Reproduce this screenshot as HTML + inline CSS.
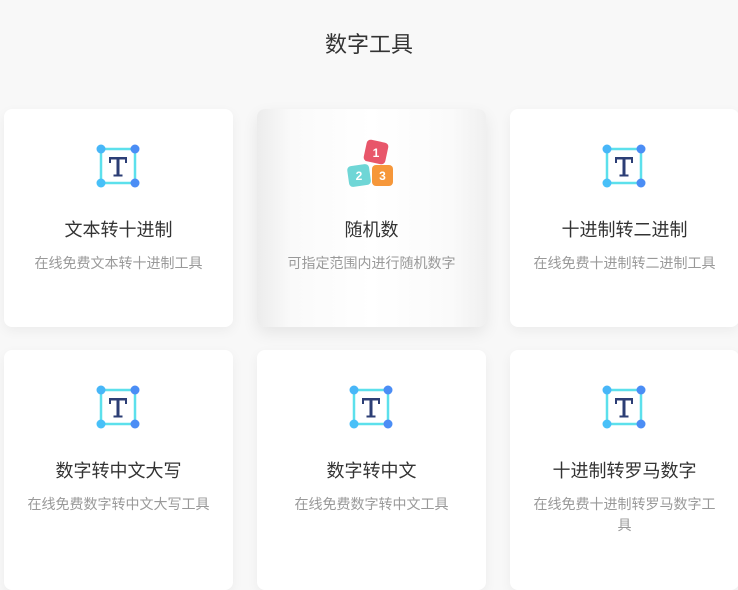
<!DOCTYPE html>
<html><head><meta charset="utf-8"><style>
*{margin:0;padding:0;box-sizing:border-box}
body{width:738px;height:566px;overflow:hidden;background:#f8f8f8;font-family:"Liberation Sans","Noto Sans CJK SC",sans-serif;position:relative}
h1{position:absolute;top:27px;left:0;width:738px;text-align:center;font-size:22px;font-weight:normal;color:#333}
.card{position:absolute;width:229px;background:#fff;border-radius:8px;text-align:center;box-shadow:0 4px 12px rgba(0,0,0,0.05)}
.card.hov{background:linear-gradient(90deg,#ececec 0%,#fafafa 15%,#fff 50%,#fafafa 85%,#f0f0f0 100%);box-shadow:0 6px 16px rgba(0,0,0,0.08)}
.ic{position:absolute;left:92px;top:35px;width:44px;height:44px}
.t{position:absolute;top:107px;width:100%;font-size:18px;color:#333}
.d{position:absolute;top:144px;left:20px;right:20px;font-size:14px;color:#999;line-height:21px}
</style></head><body>
<h1>数字工具</h1>
<svg width="0" height="0" style="position:absolute"><defs>
<g id="ti">
<rect x="5" y="5" width="34" height="34" fill="none" stroke="#5ce0ec" stroke-width="2.5"/>
<circle cx="5" cy="5" r="4.5" fill="#48b6f8"/><circle cx="39" cy="5" r="4.5" fill="#4b8df5"/>
<circle cx="5" cy="39" r="4.5" fill="#48c0f8"/><circle cx="39" cy="39" r="4.5" fill="#4b8df5"/>
<path d="M13 13h18v6h-2v-3.5h-5.5v15h3v2h-9v-2h3v-15H15v3.5h-2z" fill="#2c3e75"/>
</g></defs></svg>
<div class="card" style="left:4px;top:109px;height:218px"><svg class="ic" viewBox="0 0 44 44"><use href="#ti"/></svg><div class="t">文本转十进制</div><div class="d">在线免费文本转十进制工具</div></div>
<div class="card hov" style="left:257px;top:109px;height:218px"><svg style="position:absolute;left:87px;top:30px;width:52px;height:50px" viewBox="0 0 52 50">
<rect x="21" y="2" width="22" height="22" rx="4" fill="#e8566a" transform="rotate(12 32 13)"/><text x="32" y="18" font-size="12" font-weight="bold" fill="#fff" text-anchor="middle" font-family="Liberation Sans">1</text>
<rect x="4" y="26" width="22" height="21" rx="4" fill="#6fd6d6" transform="rotate(-8 15 36)"/><text x="15" y="41" font-size="12" font-weight="bold" fill="#fff" text-anchor="middle" font-family="Liberation Sans">2</text>
<rect x="28" y="26" width="21" height="21" rx="4" fill="#f6973a"/><text x="38.5" y="41" font-size="12" font-weight="bold" fill="#fff" text-anchor="middle" font-family="Liberation Sans">3</text>
</svg><div class="t">随机数</div><div class="d">可指定范围内进行随机数字</div></div>
<div class="card" style="left:510px;top:109px;height:218px"><svg class="ic" viewBox="0 0 44 44"><use href="#ti"/></svg><div class="t">十进制转二进制</div><div class="d">在线免费十进制转二进制工具</div></div>
<div class="card" style="left:4px;top:350px;height:240px"><svg class="ic" viewBox="0 0 44 44"><use href="#ti"/></svg><div class="t">数字转中文大写</div><div class="d">在线免费数字转中文大写工具</div></div>
<div class="card" style="left:257px;top:350px;height:240px"><svg class="ic" viewBox="0 0 44 44"><use href="#ti"/></svg><div class="t">数字转中文</div><div class="d">在线免费数字转中文工具</div></div>
<div class="card" style="left:510px;top:350px;height:240px"><svg class="ic" viewBox="0 0 44 44"><use href="#ti"/></svg><div class="t">十进制转罗马数字</div><div class="d">在线免费十进制转罗马数字工具</div></div>
</body></html>
